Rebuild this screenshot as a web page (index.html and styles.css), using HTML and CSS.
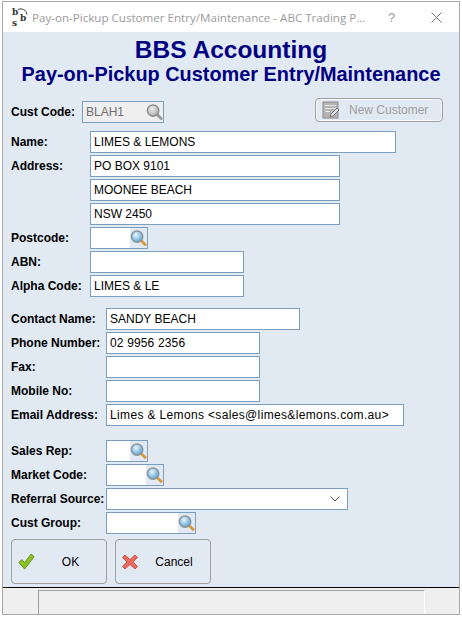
FILE: index.html
```html
<!DOCTYPE html>
<html>
	<head>
		<title>Pay-on-Pickup Customer Entry/Maintenance</title>
		<link rel="stylesheet" href="styles.css">
	</head>
	<body>
	<svg class="defs" width="0" height="0">
		<defs>
			<radialGradient id="lens" cx="40%" cy="35%" r="70%">
				<stop offset="0" stop-color="#e6f6fc"/>
				<stop offset="1" stop-color="#4f9fd0"/>
			</radialGradient>
			<radialGradient id="lensgrey" cx="40%" cy="35%" r="70%">
				<stop offset="0" stop-color="#eeeeee"/>
				<stop offset="1" stop-color="#a8a8a8"/>
			</radialGradient>
			<symbol id="glass" viewBox="0 0 18 18">
				<path d="M12 12l4 4" stroke="#d99a3c" stroke-width="3" stroke-linecap="round"/>
				<circle cx="7.5" cy="7.5" r="6" fill="url(#lens)" stroke="#8b949b" stroke-width="1.6"/>
			</symbol>
			<symbol id="glass-off" viewBox="0 0 18 18">
				<path d="M12 12l4 4" stroke="#9a9a9a" stroke-width="3" stroke-linecap="round"/>
				<circle cx="7.5" cy="7.5" r="6" fill="url(#lensgrey)" stroke="#8f8f8f" stroke-width="1.6"/>
			</symbol>
		</defs>
	</svg>
	<div class="window">
		<div class="titlebar">
			<span class="app-icon">
				<svg class="app-arc" width="15" height="12" viewBox="0 0 15 12">
					<path d="M5 1.500c4-1.500 8 0 9 5" stroke="#333" fill="none"/>
				</svg>
				<span class="app-b1">b</span><span class="app-s">s</span><span class="app-b2">b</span>
			</span>
			<span class="title-text">Pay-on-Pickup Customer Entry/Maintenance - ABC Trading P...</span>
			<span class="title-help">?</span>
			<svg class="title-close" width="11" height="11" viewBox="0 0 11 11">
				<path d="M0.500 0.500l10 10M10.500 0.500l-10 10" stroke="#777" fill="none"/>
			</svg>
		</div>
		<div class="client">
			<h1>BBS Accounting</h1>
			<h2>Pay-on-Pickup Customer Entry/Maintenance</h2>

			<div class="top-row">
				<div class="row">
					<label class="w71">Cust Code:</label>
					<div class="field lookup disabled w82">
						<span class="val">BLAH1</span>
						<span class="glass"><svg width="18" height="18"><use href="#glass-off"/></svg></span>
					</div>
				</div>
				<button class="new-btn">
					<svg width="18" height="18" viewBox="0 0 18 18">
						<rect x="1" y="1" width="15" height="16" fill="#b4b4b4" stroke="#8d8d8d"/>
						<path d="M3 4.500h11M3 7.500h11M3 10.500h5" stroke="#e8e8e8"/>
						<path d="M8 16l1-3 6-6 2 2-6 6z" fill="#e4e4e4" stroke="#777"/>
					</svg>
					<span>New Customer</span>
				</button>
			</div>

			<div class="group g-name">
				<div class="row">
					<label class="w79">Name:</label>
					<div class="field w306"><span class="val">LIMES &amp; LEMONS</span></div>
				</div>
				<div class="row">
					<label class="w79">Address:</label>
					<div class="field w250"><span class="val">PO BOX 9101</span></div>
				</div>
				<div class="row">
					<label class="w79"></label>
					<div class="field w250"><span class="val">MOONEE BEACH</span></div>
				</div>
				<div class="row">
					<label class="w79"></label>
					<div class="field w250"><span class="val">NSW 2450</span></div>
				</div>
				<div class="row">
					<label class="w79">Postcode:</label>
					<div class="field lookup w58">
						<span class="val"></span>
						<span class="glass"><svg width="18" height="18"><use href="#glass"/></svg></span>
					</div>
				</div>
				<div class="row">
					<label class="w79">ABN:</label>
					<div class="field w154"><span class="val"></span></div>
				</div>
				<div class="row">
					<label class="w79">Alpha Code:</label>
					<div class="field w154"><span class="val">LIMES &amp; LE</span></div>
				</div>
			</div>

			<div class="group g-contact">
				<div class="row">
					<label class="w95">Contact Name:</label>
					<div class="field w194"><span class="val">SANDY BEACH</span></div>
				</div>
				<div class="row">
					<label class="w95">Phone Number:</label>
					<div class="field w154"><span class="val phone">02 9956 2356</span></div>
				</div>
				<div class="row">
					<label class="w95">Fax:</label>
					<div class="field w154"><span class="val"></span></div>
				</div>
				<div class="row">
					<label class="w95">Mobile No:</label>
					<div class="field w154"><span class="val"></span></div>
				</div>
				<div class="row">
					<label class="w95">Email Address:</label>
					<div class="field w298"><span class="val email">Limes &amp; Lemons &lt;sales@limes&amp;lemons.com.au&gt;</span></div>
				</div>
			</div>

			<div class="group g-sales">
				<div class="row">
					<label class="w95">Sales Rep:</label>
					<div class="field lookup w42">
						<span class="val"></span>
						<span class="glass"><svg width="18" height="18"><use href="#glass"/></svg></span>
					</div>
				</div>
				<div class="row">
					<label class="w95">Market Code:</label>
					<div class="field lookup w58">
						<span class="val"></span>
						<span class="glass"><svg width="18" height="18"><use href="#glass"/></svg></span>
					</div>
				</div>
				<div class="row">
					<label class="w95">Referral Source:</label>
					<div class="field combo w242">
						<span class="val"></span>
						<svg width="10" height="6" viewBox="0 0 10 6">
							<path d="M0.500 0.500l4.500 4.500 4.500-4.500" stroke="#555" fill="none"/>
						</svg>
					</div>
				</div>
				<div class="row">
					<label class="w95">Cust Group:</label>
					<div class="field lookup w90">
						<span class="val"></span>
						<span class="glass"><svg width="18" height="18"><use href="#glass"/></svg></span>
					</div>
				</div>
			</div>

			<div class="buttons">
				<button class="big-btn">
					<svg width="17" height="17" viewBox="0 0 18 18">
						<path d="M1 10l3-3 3 3 7-9 3 3-10 13z" fill="#8cc21f" stroke="#5f8c12"/>
					</svg>
					<span>OK</span>
				</button>
				<button class="big-btn">
					<svg width="16" height="16" viewBox="0 0 16 16">
						<path d="M3 1l5 4.500 5-4.500 2.500 2.500-4.500 4.500 4.500 4.500-2.500 2.500-5-4.500-5 4.500-2.500-2.500 4.500-4.500-4.500-4.500z" fill="#ec6a5c" stroke="#c9564c"/>
					</svg>
					<span>Cancel</span>
				</button>
			</div>
		</div>
		<div class="statusbar">
			<div class="status-panel"></div>
		</div>
	</div>
	</body>
</html>
```

FILE: styles.css
```css
html,body{
	margin:0;
	padding:0;
	background-color:#ffffff;
}
body{
	width:462px;
	height:617px;
	overflow:hidden;
	font-family:"Liberation Sans",Arial,sans-serif;
	font-size:12px;
	color:#000000;
}
.defs{
	display:block;
	height:0;
}
.window{
	box-sizing:border-box;
	width:458px;
	height:614px;
	margin:1px 0 0 2px;
	border:1px solid #a9a9a9;
	display:flex;
	flex-direction:column;
}

/* title bar */
.titlebar{
	height:30px;
	flex:none;
	background-color:#ffffff;
	display:flex;
	align-items:center;
	color:#9b9b9b;
}
.app-icon{
	width:16px;
	height:18px;
	margin-left:9px;
	position:relative;
	font-family:"DejaVu Serif",serif;
	font-size:9px;
	font-weight:bold;
	color:#333333;
	line-height:9px;
}
.app-arc{
	position:absolute;
	left:1px;
	top:0;
}
.app-b1{
	position:absolute;
	left:0;
	top:0;
}
.app-s{
	position:absolute;
	left:0;
	top:10.500px;
}
.app-b2{
	position:absolute;
	left:8px;
	top:6px;
}
.title-text{
	margin-left:4px;
	width:356px;
	white-space:nowrap;
	font-family:"Open Sans","Liberation Sans",sans-serif;
	font-size:11.600px;
}
.title-help{
	font-size:13px;
}
.title-close{
	margin-left:36px;
}

/* main area */
.client{
	flex:1;
	background-color:#e1e9f3;
	border-bottom:1px solid #000000;
	padding:5px 0 0 8px;
	box-sizing:border-box;
}
h1,h2{
	margin:0;
	text-align:center;
	color:#000080;
	font-weight:bold;
	margin-left:-8px;
	white-space:nowrap;
}
h1{
	font-size:24.500px;
	line-height:26px;
}
h2{
	font-size:19.900px;
	line-height:22px;
}
.top-row{
	display:flex;
	justify-content:space-between;
	align-items:flex-start;
	margin-top:16px;
	padding-right:16px;
}
.row{
	display:flex;
	align-items:center;
	height:22px;
	margin-bottom:2px;
}
label{
	flex:none;
	font-weight:bold;
	white-space:nowrap;
}
.field{
	box-sizing:border-box;
	height:22px;
	flex:none;
	border:1px solid #7b9ebd;
	background-color:#ffffff;
	display:flex;
	align-items:center;
	justify-content:space-between;
	overflow:hidden;
}
.val{
	padding-left:3px;
	white-space:nowrap;
	color:#000000;
}
.phone{
	letter-spacing:0.150px;
}
.email{
	letter-spacing:0.350px;
}
.lookup .glass{
	width:17px;
	height:20px;
	flex:none;
	display:flex;
	align-items:center;
	background-color:#e1e9f3;
}
.disabled{
	background-color:#efefef;
}
.disabled .val{
	color:#6d6d6d;
}
.disabled .glass{
	background-color:#efefef;
}
.combo{
	padding-right:7px;
}

/* widths */
.w71{width:71px;}
.w79{width:79px;}
.w95{width:95px;}
.w42{width:42px;}
.w58{width:58px;}
.w82{width:82px;}
.w90{width:90px;}
.w154{width:154px;}
.w194{width:194px;}
.w242{width:242px;}
.w250{width:250px;}
.w298{width:298px;}
.w306{width:306px;}

.group{
	display:flex;
	flex-direction:column;
}
.g-name{
	margin-top:6px;
}
.g-contact{
	margin-top:9px;
}
.g-sales{
	margin-top:12px;
}

/* buttons */
.new-btn{
	box-sizing:border-box;
	width:128px;
	height:24px;
	margin-top:-3px;
	border:1px solid #a0a0a0;
	border-radius:4px;
	background-color:#e1e9f3;
	box-shadow:inset 0 0 0 1px #f3f6fa;
	font-family:"Liberation Sans",Arial,sans-serif;
	font-size:12px;
	color:#a0a0a0;
	display:flex;
	align-items:center;
	padding:0 0 0 6px;
	gap:9px;
}
.buttons{
	display:flex;
	gap:8px;
	margin-top:3px;
}
.big-btn{
	box-sizing:border-box;
	width:96px;
	height:45px;
	border:1px solid #a0a0a0;
	border-radius:4px;
	background-color:#e1e9f3;
	font-family:"Liberation Sans",Arial,sans-serif;
	font-size:12px;
	color:#000000;
	display:flex;
	align-items:center;
	padding:0 0 0 6px;
}
.big-btn span{
	flex:1;
	text-align:center;
}

/* status bar */
.statusbar{
	height:26px;
	flex:none;
	background-color:#efefef;
	display:flex;
	padding:2px 0 0 35px;
	box-sizing:border-box;
}
.status-panel{
	width:385px;
	border-top:1px solid #a0a0a0;
	border-left:1px solid #a0a0a0;
	border-right:1px solid #ffffff;
}
```
